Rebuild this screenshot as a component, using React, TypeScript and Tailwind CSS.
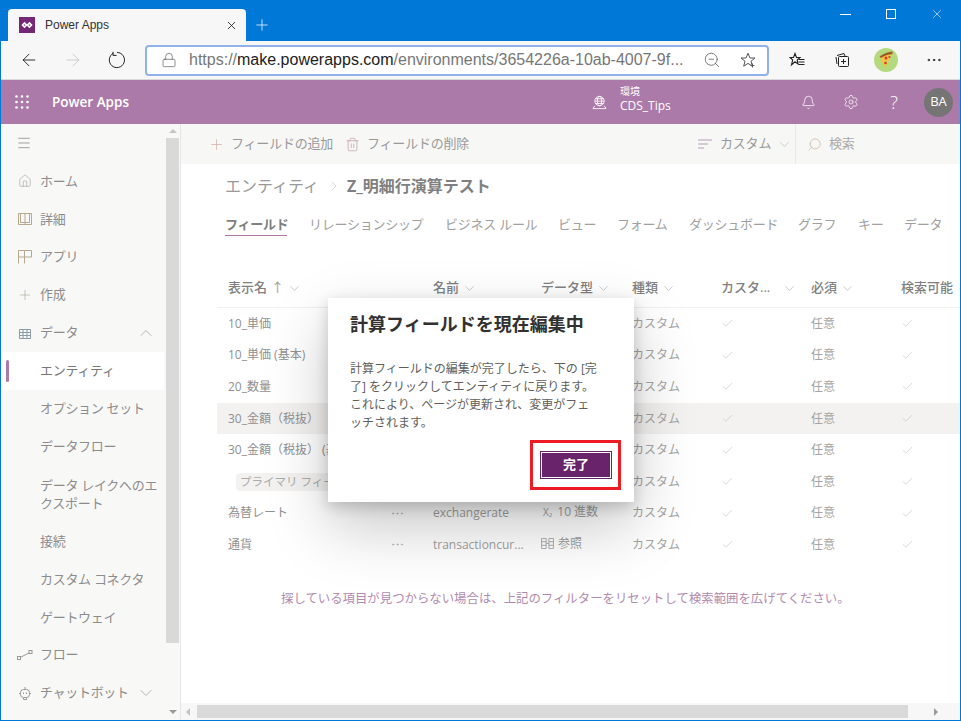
import { ArrowLeft, ArrowRight, Bell, Check, ChevronDown, ChevronRight, ChevronUp, Home, Lock, Menu, Plus, Search, Settings, Trash2, X, ZoomOut, Ellipsis } from "lucide-react";

const font = "font-['Open_Sans','Noto_Sans_CJK_JP',sans-serif]";

const rows = [
  { label: "10_単価", name: "", type: "" },
  { label: "10_単価 (基本)", name: "", type: "" },
  { label: "20_数量", name: "", type: "" },
  { label: "30_金額（税抜）", name: "", type: "", hover: true },
  { label: "30_金額（税抜） (基本)", name: "", type: "" },
  { label: "", name: "", type: "", badge: true },
  { label: "為替レート", name: "exchangerate", type: "10 進数", typeIcon: "x", dots: true },
  { label: "通貨", name: "transactioncur...", type: "参照", typeIcon: "grid", dots: true },
];

const headers = ["名前", "データ型", "種類"];

const tabs = [
  { label: "リレーションシップ", w: "w-[114px]" },
  { label: "ビジネス ルール", w: "w-[91px]" },
  { label: "ビュー", w: "w-[37px]" },
  { label: "フォーム", w: "w-[50px]" },
  { label: "ダッシュボード", w: "w-[87px]" },
  { label: "グラフ", w: "w-[38px]" },
  { label: "キー", w: "w-[24px]" },
  { label: "データ", w: "w-[38px]" },
];

function NavItem({ label, icon, chevron, active }: { label: string; icon?: React.ReactNode; chevron?: "up" | "down"; active?: boolean }) {
  return (
    <div className={`relative flex h-[37.85px] items-center text-[13px] tracking-[-0.3px] text-[#8c8c8c] ${active ? "bg-white text-[#777]" : ""}`}>
      {active && <div className="absolute left-[5px] top-[8px] h-[22px] w-[3px] rounded-sm bg-[#ab7aa8]" />}
      <div className="flex w-[39px] justify-center pl-[8px]">{icon}</div>
      <span>{label}</span>
      {chevron === "up" && <ChevronUp className="absolute left-[135px] top-[9px] h-[20px] w-[20px] text-[#a5a5a5]" strokeWidth={1} />}
      {chevron === "down" && <ChevronDown className="absolute left-[135px] top-[9px] h-[20px] w-[20px] text-[#a5a5a5]" strokeWidth={1} />}
    </div>
  );
}

function Favicon() {
  return (
    <div className="flex h-4 w-4 items-center justify-center bg-[#742774]">
      <svg viewBox="0 0 16 16" className="h-4 w-4" fill="none" stroke="white" strokeWidth="1.6">
        <path d="M3.5 8 5.5 6 7.5 8 5.5 10Z" />
        <path d="M8.5 8 10.5 6 12.5 8 10.5 10Z" />
      </svg>
    </div>
  );
}

function Waffle() {
  return (
    <svg viewBox="0 0 14 14" className="h-[14px] w-[14px]" fill="white">
      {[1.5, 7, 12.5].map((y) => [1.5, 7, 12.5].map((x) => <circle key={`${x}-${y}`} cx={x} cy={y} r="1.3" />))}
    </svg>
  );
}

function Pizza() {
  return (
    <div className="flex h-6 w-6 items-center justify-center rounded-full bg-[#b5d97f]">
      <svg viewBox="0 0 24 24" className="h-6 w-6">
        <path d="M6 9 Q12 5 18 5 L11 20 Z" fill="#f6c343" />
        <path d="M5.5 8.5 Q12 4 18.5 3.5 L18.5 6 Q12 6.5 7 10 Z" fill="#9a5a2c" />
        <circle cx="12" cy="10" r="1.5" fill="#d8392b" />
        <circle cx="15.5" cy="9" r="1.1" fill="#d8392b" />
        <circle cx="11.5" cy="15" r="1.3" fill="#d8392b" />
      </svg>
    </div>
  );
}

function EnvIcon() {
  return (
    <svg viewBox="0 0 16 16" className="h-[15px] w-[15px]" fill="none" stroke="white" strokeWidth="0.9">
      <circle cx="8" cy="6.5" r="5" />
      <ellipse cx="8" cy="6.5" rx="2.2" ry="5" />
      <path d="M3 6.5h10M3.6 4h8.8M3.6 9h8.8M1 14.5h14M3 11.5l-2 3M13 11.5l2 3" />
    </svg>
  );
}

export default function App() {
  return (
    <div className={`${font} relative flex h-[721px] w-[961px] flex-col overflow-hidden border-x border-b border-[#0078d7] bg-white`}>
      {/* window title bar */}
      <div className="flex h-[41px] shrink-0 items-end bg-[#0078d7] pl-[7px]">
        <div className="flex h-[32px] w-[238px] items-center rounded-t-[4px] bg-[#f7f7f7] pl-[11px] pr-[8px] text-[#333]">
          <Favicon />
          <span className="ml-[10px] font-['Liberation_Sans',sans-serif] text-[12px]">Power Apps</span>
          <X className="ml-auto h-[13px] w-[13px] text-[#222]" strokeWidth={1.6} />
        </div>
        <Plus className="mb-[7px] ml-[7px] h-[18px] w-[18px] text-white" strokeWidth={1} />
        <div className="mb-[20px] ml-auto flex items-center">
          <div className="flex w-[46px] justify-center"><div className="h-px w-[11px] bg-white" /></div>
          <div className="flex w-[46px] justify-center"><div className="h-[10px] w-[10px] border border-white" /></div>
          <div className="flex w-[46px] justify-center"><X className="h-[14px] w-[14px] text-white" strokeWidth={1} /></div>
        </div>
      </div>

      {/* browser toolbar */}
      <div className="flex h-[39px] shrink-0 items-center border-b border-[#d9d9d9] bg-[#f7f7f7]">
        <div className="flex w-[144px] items-center">
          <div className="flex w-[56px] justify-center"><ArrowLeft className="h-[20px] w-[20px] text-[#222]" strokeWidth={1.1} /></div>
          <div className="flex w-[32px] justify-center"><ArrowRight className="h-[20px] w-[20px] text-[#c8c8c8]" strokeWidth={1.1} /></div>
          <div className="flex w-[56px] justify-center">
            <svg viewBox="0 0 18 18" className="h-[18px] w-[18px]" fill="none" stroke="#222" strokeWidth="1">
              <path d="M5.5 2.2A7.6 7.6 0 1 0 9 1.4" />
              <path d="M5 .8v3.6h3.6" />
            </svg>
          </div>
        </div>
        <div className="flex h-[31px] w-[624px] items-center rounded-[4px] border-2 border-[#90b2e8] bg-white pl-[14px]">
          <Lock className="h-[16px] w-[16px] text-[#555]" strokeWidth={1} />
          <div className="ml-[12px] w-[507px] whitespace-nowrap font-['Liberation_Sans',sans-serif] text-[16px] text-[#777]">
            https://<span className="text-[#222]">make.powerapps.com</span>/environments/3654226a-10ab-4007-9f...
          </div>
          <ZoomOut className="ml-[7px] h-[18px] w-[18px] text-[#555]" strokeWidth={1} />
          <svg viewBox="0 0 16 16" className="ml-[19px] h-[16px] w-[16px]" fill="none" stroke="#555" strokeWidth="1">
            <path d="M8 1.2 10 6h5l-4 3.2 1.3 5L8 11.4 3.700 14.200 5 9.200 1 6h5Z" />
            <path d="M12.500 11.500v4M10.500 13.500h4" />
          </svg>
        </div>
        <div className="flex items-center">
          <svg viewBox="0 0 16 16" className="ml-[20px] h-[16px] w-[16px]" fill="none" stroke="#222" strokeWidth="1.100">
            <path d="M6 1.500 7.500 5.500H11L8.200 8 9 12 6 9.800 2.500 13 3.700 8 1 5.500H4.500Z" />
            <path d="M10 7.500h5.500M9.500 10h6M9.500 12.500h6" />
          </svg>
          <svg viewBox="0 0 16 16" className="ml-[29px] h-[16px] w-[16px]" fill="none" stroke="#222" strokeWidth="1">
            <path d="M3 3.500 10 1.500 11 4M2 5l1 7" />
            <rect x="4.500" y="4.500" width="10" height="10" rx="1" />
            <path d="M9.500 7v5M7 9.500h5" />
          </svg>
          <div className="ml-[24px]"><Pizza /></div>
          <Ellipsis className="ml-[27px] h-[18px] w-[18px] text-[#222]" strokeWidth={1.3} />
        </div>
      </div>

      {/* app header */}
      <div className="flex h-[44px] shrink-0 items-center bg-[#ab7aa8] text-white">
        <div className="ml-[14px]"><Waffle /></div>
        <span className="ml-[23px] w-[540px] font-['Open_Sans',sans-serif] text-[13.5px] font-semibold">Power Apps</span>
        <EnvIcon />
        <div className="ml-[13px] flex h-[38px] w-[181px] flex-col justify-start pt-[2px] leading-none">
          <span className="text-[10px] leading-[13px]">環境</span>
          <span className="text-[12px] leading-[16px]">CDS_Tips</span>
        </div>
        <Bell className="h-[15px] w-[15px]" strokeWidth={1.2} />
        <Settings className="ml-[27px] h-[16px] w-[16px]" strokeWidth={1.1} />
        <span className="ml-[29px] w-[12px] text-center text-[18px] font-light">?</span>
        <div className="ml-[24px] flex h-[29px] w-[29px] items-center justify-center rounded-full bg-[#757575] text-[13px]">BA</div>
      </div>

      <div className="flex min-h-0 flex-1">
        {/* left nav */}
        <div className="flex w-[180px] shrink-0 border-r border-[#e6e6e6] bg-[#f8f8f7]">
          <div className="w-[163px] shrink-0">
            <div className="flex h-[38.5px] items-center pl-[15px]"><Menu className="h-[16px] w-[16px] text-[#777]" strokeWidth={1} /></div>
            <NavItem label="ホーム" icon={<Home className="h-[14px] w-[14px] text-[#999]" strokeWidth={1} />} />
            <NavItem label="詳細" icon={
              <svg viewBox="0 0 14 14" className="h-[14px] w-[14px]" fill="none" stroke="#b8a890"><path d="M.5 1.500h13v11H.5zM2.500 1.500h9v9h-9zM7 1.500v11" /></svg>
            } />
            <NavItem label="アプリ" icon={
              <svg viewBox="0 0 14 14" className="h-[14px] w-[14px]" fill="none" stroke="#b8a890"><path d="M.5 13.500V.5h13v6.500H.5M6.500.5v13" /></svg>
            } />
            <NavItem label="作成" icon={<Plus className="h-[16px] w-[16px] text-[#a5b19f]" strokeWidth={1} />} />
            <NavItem label="データ" chevron="up" icon={
              <svg viewBox="0 0 12 12" className="h-[12px] w-[12px]" fill="none" stroke="#8a9aa6"><path d="M.5 2.500h11v9H.5zM.5 5.500h11M.5 8.500h11M4 2.500v9M8 2.500v9" /></svg>
            } />
            <NavItem label="エンティティ" active />
            <NavItem label="オプション セット" />
            <NavItem label="データフロー" />
            <div className="flex h-[57.5px] items-center pl-[39px] text-[13px] leading-[18px] tracking-[-0.3px] text-[#8c8c8c]">データ レイクへのエクスポート</div>
            <NavItem label="接続" />
            <NavItem label="カスタム コネクタ" />
            <NavItem label="ゲートウェイ" />
            <NavItem label="フロー" icon={
              <svg viewBox="0 0 16 10" className="h-[10px] w-[16px]" fill="none" stroke="#999"><rect x=".5" y="6.500" width="3" height="3" /><rect x="12" y=".5" width="3" height="3" /><path d="M4 7 12 3" /></svg>
            } />
            <NavItem label="チャットボット" chevron="down" icon={
              <svg viewBox="0 0 14 14" className="h-[14px] w-[14px]" fill="none" stroke="#999"><rect x="2.500" y="3.500" width="9" height="8" rx="3" /><path d="M7 1v2.500M1 7.500h1.500M11.500 7.500H13M5.500 12v1.500h3V12" /><path d="M5.500 6.500v1.500M8.500 6.500v1.500" /></svg>
            } />
          </div>
          <div className="ml-[2px] flex w-[13px] flex-col items-center">
            <div className="mt-[5px] h-0 w-0 border-x-[4px] border-b-[4px] border-x-transparent border-b-[#c4c4c4]" />
            <div className="mt-[5px] h-[505px] w-full bg-[#d9d9d9]" />
            <div className="mt-auto mb-[6px] h-0 w-0 border-x-[4px] border-t-[4px] border-x-transparent border-t-[#9a9a9a]" />
          </div>
        </div>

        {/* main */}
        <div className="flex min-w-0 flex-1 flex-col">
          <div className="flex h-[40px] shrink-0 items-center bg-[#f7f7f5] text-[13px] tracking-[-0.2px] text-[#999]">
            <Plus className="ml-[27px] h-[17px] w-[17px] text-[#cfa9a5]" strokeWidth={1} />
            <span className="ml-[6px] w-[107px]">フィールドの追加</span>
            <Trash2 className="ml-[7px] h-[15px] w-[15px] text-[#b58ea0]" strokeWidth={1} />
            <span className="ml-[7px] w-[331px]">フィールドの削除</span>
            <svg viewBox="0 0 14 10" className="h-[10px] w-[14px]" fill="none" stroke="#b79bb5"><path d="M0 1h14M0 5h10M0 9h6" /></svg>
            <span className="ml-[8px] w-[52px]">カスタム</span>
            <ChevronDown className="ml-[5px] h-[15px] w-[15px] text-[#b5b5b5]" strokeWidth={1} />
            <div className="ml-[3px] h-full w-px bg-[#e8e8e8]" />
            <Search className="ml-[11px] h-[15px] w-[15px] -scale-x-100 text-[#c2a98f]" strokeWidth={1} />
            <span className="ml-[7px] text-[#aaa]">検索</span>
          </div>

          <div className="flex h-[46px] shrink-0 items-center pb-[2px] pl-[44px] text-[16px] text-[#999]">
            <span className="w-[95px]">エンティティ</span>
            <ChevronRight className="ml-[6px] h-[16px] w-[16px] text-[#c4c4c4]" strokeWidth={1} />
            <span className="ml-[5px] font-bold text-[#808080]">Z_明細行演算テスト</span>
          </div>

          <div className="flex h-[28px] shrink-0 items-start gap-[22px] pl-[44px] pt-[5px] text-[13px] tracking-[-0.25px] whitespace-nowrap text-[#a0a0a0]">
            <span className="w-[62px] border-b border-[#ab7aa8] font-bold text-[#808080]">フィールド</span>
            {tabs.map((t) => (
              <span key={t.label} className={t.w}>{t.label}</span>
            ))}
          </div>

          {/* table */}
          <div className="ml-[36px] mt-[31px] overflow-hidden">
            <div className="grid h-[39px] w-[900px] grid-cols-[163px_42px_108px_91px_89px_90px_90px_1fr] items-center border-b border-[#f0f0f0] pl-[11px] text-[13px] whitespace-nowrap text-[#808080]">
              <div className="flex items-center font-medium">
                表示名 <span className="ml-[4px] text-[#aaa]">↑</span>
                <ChevronDown className="ml-[3px] h-[15px] w-[15px] text-[#aaa]" strokeWidth={1} />
              </div>
              <div />
              {headers.map((h) => (
                <div key={h} className="flex items-center font-medium">
                  {h}
                  <ChevronDown className="ml-[3px] h-[15px] w-[15px] text-[#aaa]" strokeWidth={1} />
                </div>
              ))}
              <div className="flex items-center font-medium">
                カスタ...
                <ChevronDown className="ml-[12px] h-[15px] w-[15px] text-[#aaa]" strokeWidth={1} />
              </div>
              <div className="flex items-center font-medium">
                必須
                <ChevronDown className="ml-[3px] h-[15px] w-[15px] text-[#aaa]" strokeWidth={1} />
              </div>
              <div className="font-medium">検索可能</div>
            </div>
            {rows.map((r, i) => (
              <div
                key={i}
                className={`grid h-[31.6px] w-[900px] grid-cols-[163px_42px_108px_91px_89px_90px_90px_1fr] items-center pl-[11px] text-[12px] whitespace-nowrap text-[#909090] ${r.hover ? "bg-[#f3f2f0]" : ""}`}
              >
                <div>
                  {r.badge ? (
                    <span className="ml-[8px] inline-block h-[18px] w-[150px] rounded-sm bg-[#f3f2f1] pl-[4px] text-[11.5px] leading-[18px] text-[#aaa]">プライマリ フィールド</span>
                  ) : (
                    r.label
                  )}
                </div>
                <div className="-ml-px text-[#aaa]">{r.dots && <Ellipsis className="h-[15px] w-[15px]" strokeWidth={1} />}</div>
                <div className="text-[#a0a0a0]">{r.name}</div>
                <div className="flex -translate-y-px items-center text-[#a0a0a0]">
                  {r.typeIcon === "x" && <span className="ml-[2px] mr-[5px] text-[10px]">X₂</span>}
                  {r.typeIcon === "grid" && (
                    <svg viewBox="0 0 14 12" className="mr-[4px] h-[11px] w-[13px]" fill="none" stroke="#aaa"><path d="M.5.5h5v11h-5zM8.500.5h5v11h-5zM.5 4h5M.5 8h5M8.500 4h5M8.500 8h5M5.500 6h3" /></svg>
                  )}
                  {r.type}
                </div>
                <div className="text-[#a5a5a5]">カスタム</div>
                <div><Check className="h-[13px] w-[13px] text-[#bbb]" strokeWidth={1} /></div>
                <div className="text-[#a5a5a5]">任意</div>
                <div><Check className="h-[13px] w-[13px] text-[#bbb]" strokeWidth={1} /></div>
              </div>
            ))}
          </div>

          <div className="mt-[29px] pl-[100px] text-[12.4px] whitespace-nowrap text-[#b08bb0]">探している項目が見つからない場合は、上記のフィルターをリセットして検索範囲を広げてください。</div>

          {/* horizontal scrollbar */}
          <div className="mt-auto flex h-[17px] shrink-0 items-center bg-[#f7f7f7]">
            <div className="ml-[5px] h-0 w-0 border-y-[4px] border-r-[4px] border-y-transparent border-r-[#c4c4c4]" />
            <div className="ml-[7px] h-[13px] w-[711px] bg-[#d9d9d9]" />
            <div className="ml-auto mr-[22px] h-0 w-0 border-y-[4px] border-l-[4px] border-y-transparent border-l-[#9a9a9a]" />
          </div>
        </div>
      </div>

      {/* dialog */}
      <div className="absolute left-[327px] top-[298px] flex h-[204px] w-[306px] flex-col bg-white px-[22px] shadow-[0_25px_58px_rgba(0,0,0,0.22),0_5px_14px_rgba(0,0,0,0.18)]">
        <div className="mt-[14px] whitespace-nowrap text-[18px] font-bold leading-[24px] text-[#323130]">計算フィールドを現在編集中</div>
        <p className="mt-[24px] whitespace-nowrap text-[12px] leading-[18px] text-[#605e5c]">
          計算フィールドの編集が完了したら、下の [完<br />
          了] をクリックしてエンティティに戻ります。<br />
          これにより、ページが更新され、変更がフェ<br />
          ッチされます。
        </p>
        <div className="ml-auto mr-[-9px] mt-[8px] border-[3px] border-[#ed1c24] py-[8px] pl-[7px] pr-[6px]">
          <button className="flex h-[28px] w-[72px] items-center justify-center border border-[#68236a] bg-[#68236a] text-[13px] font-bold text-white outline outline-1 -outline-offset-2 outline-white">完了</button>
        </div>
      </div>
    </div>
  );
}
